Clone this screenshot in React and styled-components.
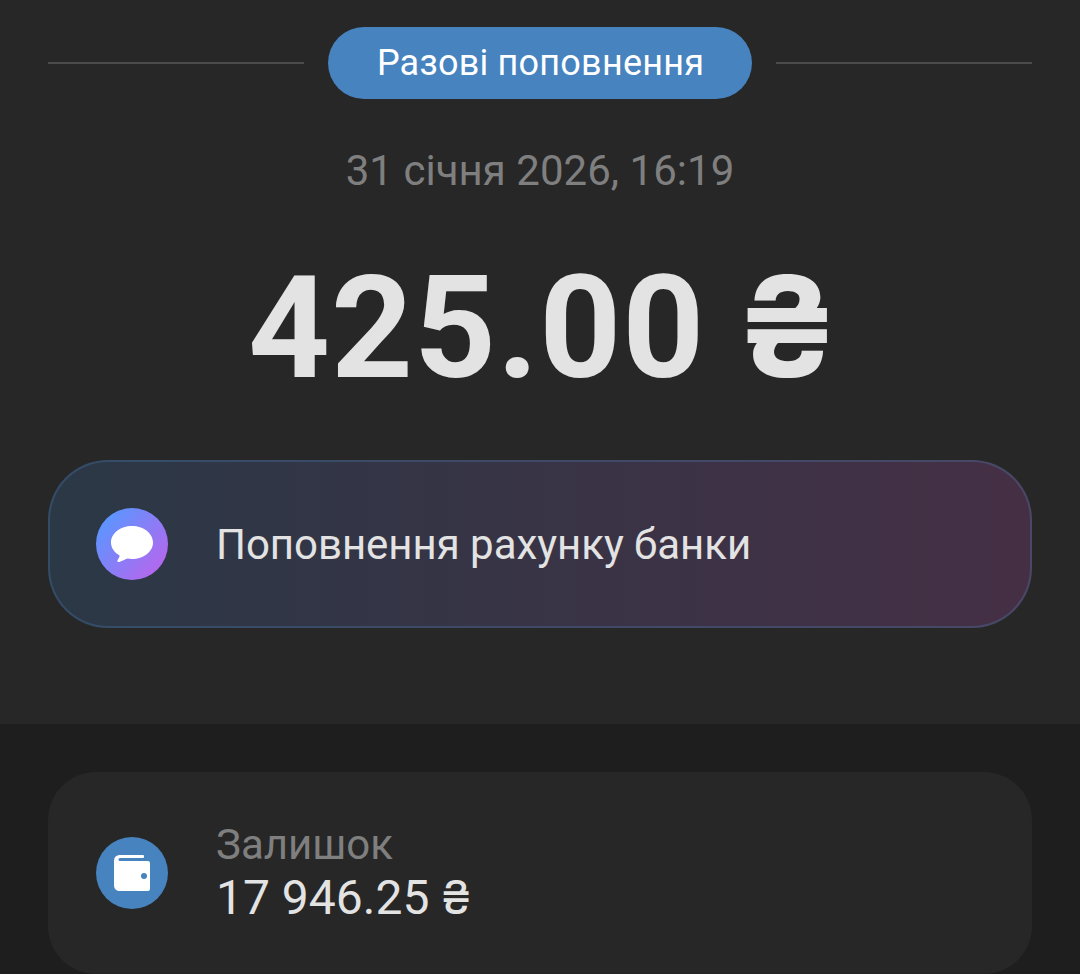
import React from "react";
import styled, { createGlobalStyle } from "styled-components";

const App = () => {
  return (
    <Page>
      <GlobalStyle />
      <Summary>
        <TypeRow>
          <Line />
          <Badge>Разові поповнення</Badge>
          <Line />
        </TypeRow>
        <DateText>31 січня 2026, 16:19</DateText>
        <Amount>
          425.00 <Currency>₴</Currency>
        </Amount>
        <Comment>
          <Icon viewBox="0 0 72 72">
            <defs>
              <linearGradient id="bubble" x1="0.1" y1="0.15" x2="0.9" y2="0.85">
                <stop offset="0" stopColor="#5a96ff" />
                <stop offset="1" stopColor="#b567ee" />
              </linearGradient>
            </defs>
            <circle cx="36" cy="36" r="36" fill="url(#bubble)" />
            <path
              d="M36 18c11.600 0 21 7.400 21 16.500S47.600 51 36 51c-1.600 0-3-.1-4.500-.4-2.600.9-5.200 2.500-8 3.400-1.500.4-2.700-.6-2-1.800.9-1.400 2-3 2.100-4.700C18.300 44.500 15 39.800 15 34.500 15 25.400 24.400 18 36 18z"
              fill="#fff"
            />
          </Icon>
          <CommentText>Поповнення рахунку банки</CommentText>
        </Comment>
      </Summary>
      <Details>
        <Card>
          <Icon viewBox="0 0 72 72">
            <circle cx="36" cy="36" r="36" fill="#4683bf" />
            <path
              d="M23.500 18H47a1 1 0 0 1 1 1v1a1 1 0 0 1-1 1H24a1.500 1.500 0 0 0 0 3h28a2 2 0 0 1 2 2v26a2 2 0 0 1-2 2H23.500a5.500 5.500 0 0 1-5.500-5.500v-25a5.500 5.500 0 0 1 5.500-5.500z"
              fill="#fff"
            />
            <circle cx="48" cy="39" r="3" fill="#4683bf" />
          </Icon>
          <Balance>
            <Label>Залишок</Label>
            <Value>
              17 946.25 <SmallCurrency>₴</SmallCurrency>
            </Value>
          </Balance>
        </Card>
      </Details>
    </Page>
  );
};

export default App;

const GlobalStyle = createGlobalStyle`
  * {
    box-sizing: border-box;
  }
  body {
    margin: 0;
    background-color: #1e1e1e;
    font-family: Roboto, "Noto Sans", sans-serif;
  }
`;

const Page = styled.div`
  width: 100%;
  height: 974px;
  overflow: hidden;
`;

const Summary = styled.section`
  display: flex;
  flex-direction: column;
  height: 724px;
  padding: 27px 48px 0;
  background-color: #272727;
`;

const TypeRow = styled.div`
  display: flex;
  align-items: center;
  gap: 24px;
`;

const Line = styled.div`
  flex: 1;
  height: 2px;
  background-color: #4b4b4b;
`;

const Badge = styled.div`
  width: 424px;
  height: 72px;
  border-radius: 36px;
  padding-left: 1px;
  background-color: #4683bf;
  color: #fff;
  font-size: 36px;
  line-height: 73px;
  letter-spacing: 0.22px;
  text-align: center;
`;

const DateText = styled.div`
  margin-top: 47px;
  color: #7f7f7f;
  font-size: 42px;
  line-height: 50px;
  letter-spacing: 0.03px;
  text-align: center;
`;

const Amount = styled.div`
  height: 170px;
  margin-top: 47px;
  color: #e3e3e3;
  font-size: 143px;
  font-weight: 700;
  line-height: 171px;
  letter-spacing: 0.9px;
  text-align: center;
  white-space: nowrap;
`;

const Currency = styled.span`
  margin: 0 -8px 0 -6px;
  font-family: Inter, sans-serif;
  font-size: 140px;
  line-height: 1;
`;

const SmallCurrency = styled.span`
  font-family: Inter, sans-serif;
  font-size: 47px;
  line-height: 1;
`;

const Comment = styled.div`
  display: flex;
  align-items: center;
  gap: 48px;
  height: 168px;
  margin-top: 47px;
  padding: 0 46px;
  border: 2px solid transparent;
  border-radius: 60px;
  background: linear-gradient(90deg, #2b3846, #452f45) padding-box,
    linear-gradient(90deg, #344c68, #484867) border-box;
`;

const Icon = styled.svg`
  width: 72px;
  height: 72px;
`;

const CommentText = styled.div`
  padding-top: 2px;
  color: #e3e3e3;
  font-size: 42px;
  line-height: 50px;
  letter-spacing: -0.04px;
`;

const Details = styled.section`
  padding: 48px 48px 0;
`;

const Card = styled.div`
  display: flex;
  align-items: center;
  gap: 48px;
  height: 202px;
  padding: 0 48px;
  border-radius: 48px;
  background-color: #272727;
`;

const Balance = styled.div`
  display: flex;
  flex-direction: column;
`;

const Label = styled.div`
  color: #7f7f7f;
  font-size: 42px;
  line-height: 50px;
`;

const Value = styled.div`
  color: #e3e3e3;
  font-size: 48px;
  line-height: 56px;
`;
